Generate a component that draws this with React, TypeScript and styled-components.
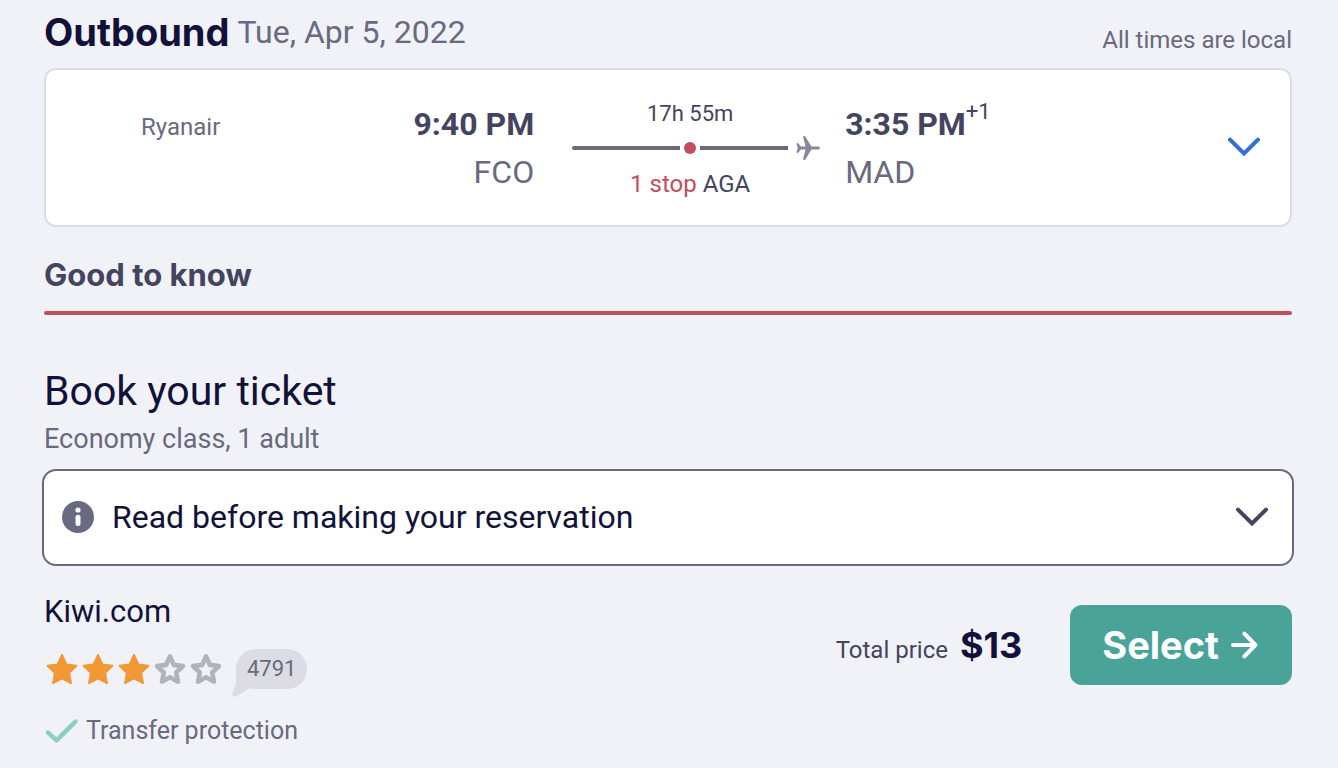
import React from "react";
import styled, { createGlobalStyle } from "styled-components";

const GlobalStyle = createGlobalStyle`
  *, *::before, *::after { box-sizing: border-box; }
  body {
    margin: 0;
    background: #f1f2f7;
    color: #11113a;
    font-family: Roboto, "Liberation Sans", sans-serif;
  }
  h1, h2, h3, p { margin: 0; font-weight: 400; }
  button { font: inherit; border: 0; padding: 0; background: none; cursor: pointer; }
  svg { display: block; flex: none; }
`;

const Page = styled.main`
  padding: 8px 46px 20px 44px;
`;

const LegHeader = styled.header`
  display: flex;
  justify-content: space-between;
  align-items: flex-end;
  height: 60px;
  padding-bottom: 12px;
`;

const LegTitle = styled.div`
  display: flex;
  align-items: flex-start;
  gap: 8px;
`;

const Direction = styled.h2`
  font-family: Inter, sans-serif;
  font-size: 38px;
  line-height: 48px;
  font-weight: 700;
`;

const LegDate = styled.span`
  font-size: 32px;
  line-height: 48px;
  color: #69697f;
`;

const Note = styled.span`
  font-size: 24px;
  line-height: 32px;
  color: #69697f;
`;

const FlightCard = styled.article`
  display: grid;
  grid-template-columns: minmax(0, 18fr) minmax(0, 19fr) 248px minmax(0, 35fr) 32px;
  align-items: start;
  min-height: 159px;
  padding: 28px 30px 24px 95px;
  background: #fff;
  border: 2px solid #dcdce4;
  border-radius: 12px;
`;

const Airline = styled.span`
  padding-top: 13px;
  font-size: 24px;
  line-height: 32px;
  color: #69697f;
`;

const Stop = styled.div<{ $side: "from" | "to" }>`
  display: flex;
  flex-direction: column;
  align-items: ${(p) => (p.$side === "from" ? "flex-end" : "flex-start")};
  padding-top: 2px;
  ${(p) => (p.$side === "from" ? "margin-right: 38px;" : "margin-left: 25px;")}
`;

const Time = styled.time`
  display: flex;
  font-size: 32px;
  line-height: 48px;
  font-weight: 700;
  color: #444460;
  white-space: nowrap;
`;

const DayOffset = styled.span`
  font-size: 22px;
  line-height: 24px;
  font-weight: 400;
`;

const Airport = styled.span`
  font-size: 32px;
  line-height: 48px;
  color: #69697f;
`;

const Route = styled.div`
  color: #444460;
  font-size: 24px;
  line-height: 32px;
`;

const RouteText = styled.p`
  margin-right: 12px;
  text-align: center;
`;

const Duration = styled(RouteText)`
  font-size: 22px;
`;

const StopCount = styled.span`
  color: #c44d5c;
`;

const Track = styled.div`
  display: flex;
  align-items: center;
  gap: 4px;
  height: 36px;
  margin-bottom: 2px;
`;

const Segment = styled.span<{ $grow: number }>`
  flex: ${(p) => p.$grow} 1 0;
  height: 4px;
  background: #69697f;
  &:first-child { border-radius: 2px 0 0 2px; }
`;

const StopDot = styled.span`
  width: 12px;
  height: 12px;
  border-radius: 50%;
  background: #c44d5c;
`;

const PlaneIcon = styled.svg`
  margin-left: 4px;
`;

const ExpandButton = styled.button`
  display: flex;
  align-items: center;
  height: 98px;
  color: #2f6de0;
`;

const SectionTitle = styled.h3`
  margin-top: 24px;
  font-family: Inter, sans-serif;
  font-size: 31px;
  line-height: 48px;
  font-weight: 700;
  color: #444460;

  &::after {
    content: "";
    display: block;
    height: 4px;
    margin-top: 12px;
    border-radius: 2px;
    background: #c44d5c;
  }
`;

const BookTitle = styled.h2`
  margin-top: 52px;
  font-size: 41px;
  line-height: 48px;
`;

const Cabin = styled.p`
  margin-top: 8px;
  font-size: 27px;
  line-height: 32px;
  color: #69697f;
`;

const Notice = styled.button`
  display: flex;
  align-items: center;
  gap: 18px;
  width: calc(100% + 4px);
  height: 97px;
  margin: 14px -2px 0;
  padding: 0 24px 2px 18px;
  background: #fff;
  border: 2px solid #69697f;
  border-radius: 14px;
  color: #444460;
`;

const NoticeText = styled.span`
  flex: 1;
  text-align: left;
  font-size: 32px;
  line-height: 48px;
  color: #11113a;
`;

const Offer = styled.section`
  display: flex;
  justify-content: space-between;
  align-items: flex-start;
  margin-top: 22px;
`;

const Provider = styled.h3`
  font-size: 31px;
  line-height: 48px;
`;

const Rating = styled.div`
  display: flex;
  align-items: center;
  gap: 12px;
  margin-top: 13px;
`;

const Stars = styled.div`
  display: flex;
`;

const ReviewCount = styled.a`
  position: relative;
  padding: 0 11px;
  border-radius: 20px;
  background: #dcdce4;
  font-size: 22px;
  line-height: 40px;
  color: #69697f;
  text-decoration: none;
`;

const Tail = styled.svg`
  position: absolute;
  left: -4px;
  top: 20px;
`;

const ReviewNumber = styled.span`
  position: relative;
`;

const Perk = styled.p`
  display: flex;
  align-items: center;
  gap: 8px;
  margin-top: 26px;
  font-size: 25px;
  line-height: 32px;
  color: #69697f;
`;

const Purchase = styled.div`
  display: flex;
  align-items: center;
  gap: 48px;
  margin-top: 17px;
`;

const Price = styled.div`
  display: flex;
  align-items: baseline;
  gap: 12px;
  font-size: 24px;
  color: #444460;
`;

const Amount = styled.strong`
  font-family: Inter, sans-serif;
  font-size: 36px;
  line-height: 48px;
  font-weight: 700;
  color: #11113a;
`;

const SelectButton = styled.button`
  display: flex;
  align-items: center;
  gap: 11px;
  height: 80px;
  padding: 0 34px 0 32px;
  border-radius: 12px;
  background: #4aa398;
  color: #fff;
  font-family: Inter, sans-serif;
  font-size: 38px;
  line-height: 48px;
  font-weight: 700;
`;

const Chevron = () => (
  <svg width="32" height="20" viewBox="0 0 32 20" fill="none" stroke="currentColor" strokeWidth="4" strokeLinecap="round" aria-hidden="true">
    <path d="M2 2.6 16 16.4 30 2.6" />
  </svg>
);

const Plane = () => (
  <PlaneIcon width="24" height="24" viewBox="0 0 24 24" fill="#8b8798" aria-hidden="true">
    <path d="M7 0.6C7 0 8.8-.2 9.5.8L15.4 10.4H22.2C24.6 10.6 24.6 13.4 22.2 13.6H15.4L9.5 23.2C8.8 24.2 7 24 7 23.4L9.5 13.6H4.8L2.4 16.8H.4L1.7 12 .4 7.2H2.4L4.8 10.4H9.5Z" />
  </PlaneIcon>
);

const starPath =
  "M18 4 22.4 13.4 32.4 14.7 25.1 21.9 27 32.1 18 27.3 9 32.1 10.9 21.9 3.6 14.7 13.6 13.4Z";

const Star = ({ filled }: { filled: boolean }) => (
  <svg width="36" height="36" viewBox="0 0 36 36" aria-hidden="true">
    {filled ? (
      <path d={starPath} fill="#f19937" stroke="#f19937" strokeWidth="2" strokeLinejoin="round" />
    ) : (
      <path
        d="M18 5.4 21.8 13.9 31 15.1 24.2 21.5 26 30.7 18 26.3 10 30.7 11.8 21.5 5 15.1 14.2 13.9Z"
        fill="none"
        stroke="#b2b2bf"
        strokeWidth="4.6"
        strokeLinejoin="round"
      />
    )}
  </svg>
);

export default function App() {
  return (
    <>
      <GlobalStyle />
      <Page>
        <LegHeader>
          <LegTitle>
            <Direction>Outbound</Direction>
            <LegDate>Tue, Apr 5, 2022</LegDate>
          </LegTitle>
          <Note>All times are local</Note>
        </LegHeader>

        <FlightCard>
          <Airline>Ryanair</Airline>
          <Stop $side="from">
            <Time>9:40 PM</Time>
            <Airport>FCO</Airport>
          </Stop>
          <Route>
            <Duration>17h 55m</Duration>
            <Track>
              <Segment $grow={108} />
              <StopDot />
              <Segment $grow={88} />
              <Plane />
            </Track>
            <RouteText>
              <StopCount>1 stop</StopCount> AGA
            </RouteText>
          </Route>
          <Stop $side="to">
            <Time>
              3:35 PM<DayOffset>+1</DayOffset>
            </Time>
            <Airport>MAD</Airport>
          </Stop>
          <ExpandButton aria-label="Show flight details">
            <Chevron />
          </ExpandButton>
        </FlightCard>

        <SectionTitle>Good to know</SectionTitle>

        <BookTitle>Book your ticket</BookTitle>
        <Cabin>Economy class, 1 adult</Cabin>

        <Notice aria-expanded="false">
          <svg width="32" height="32" viewBox="0 0 32 32" aria-hidden="true">
            <circle cx="16" cy="16" r="16" fill="#69697f" />
            <circle cx="16" cy="9" r="2.6" fill="#fff" />
            <path d="M16 16.2V22.6" stroke="#fff" strokeWidth="5" strokeLinecap="round" />
          </svg>
          <NoticeText>Read before making your reservation</NoticeText>
          <Chevron />
        </Notice>

        <Offer>
          <div>
            <Provider>Kiwi.com</Provider>
            <Rating>
              <Stars role="img" aria-label="3 out of 5 stars">
                {[1, 2, 3, 4, 5].map((n) => (
                  <Star key={n} filled={n <= 3} />
                ))}
              </Stars>
              <ReviewCount href="#reviews">
                <Tail width="24" height="28" viewBox="0 0 24 28" aria-hidden="true">
                  <path d="M4 0V14L.4 24.6C0 26.8 2 28.4 4 27.4L17 19.6 24 14V0Z" fill="#dcdce4" />
                </Tail>
                <ReviewNumber>4791</ReviewNumber>
              </ReviewCount>
            </Rating>
            <Perk>
              <svg width="34" height="24" viewBox="0 0 34 24" fill="none" stroke="#88cfc4" strokeWidth="4.4" strokeLinecap="round" strokeLinejoin="round" aria-hidden="true">
                <path d="M4 13.6 12.6 21.4 31.4 2.6" />
              </svg>
              Transfer protection
            </Perk>
          </div>
          <Purchase>
            <Price>
              Total price <Amount>$13</Amount>
            </Price>
            <SelectButton>
              Select
              <svg width="28" height="28" viewBox="0 0 28 28" fill="none" stroke="#fff" strokeWidth="4" strokeLinecap="round" strokeLinejoin="round" aria-hidden="true">
                <path d="M3 14H25M14.4 2.6 25.4 14 14.4 25.4" />
              </svg>
            </SelectButton>
          </Purchase>
        </Offer>
      </Page>
    </>
  );
}
